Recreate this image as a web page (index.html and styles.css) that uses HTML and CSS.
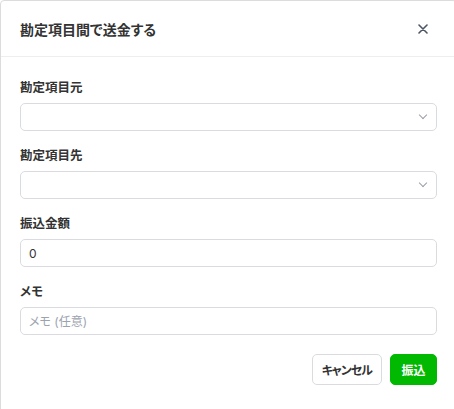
FILE: index.html
```html
<!DOCTYPE html>
<html lang="ja">
<head>
    <meta charset="UTF-8">
    <meta name="viewport" content="width=device-width, initial-scale=1.0">
    <title>勘定項目間で送金する</title>
    <link rel="stylesheet" href="styles.css">
</head>
<body>
    <div class="dialog">
        <!-- ヘッダー -->
        <div class="dialog-header">
            <h2>勘定項目間で送金する</h2>
            <button class="close" aria-label="閉じる">
                <svg width="10" height="10" viewBox="0 0 10 10">
                    <path d="M1 1L9 9M9 1L1 9" stroke="#4b5563" stroke-width="1.6" stroke-linecap="round"/>
                </svg>
            </button>
        </div>
        <!-- フォーム -->
        <div class="dialog-body">
            <div class="field">
                <label>勘定項目元</label>
                <div class="select"><span class="chevron"></span></div>
            </div>
            <div class="field">
                <label>勘定項目先</label>
                <div class="select"><span class="chevron"></span></div>
            </div>
            <div class="field">
                <label>振込金額</label>
                <input type="text" value="0">
            </div>
            <div class="field">
                <label>メモ</label>
                <input type="text" placeholder="メモ (任意)">
            </div>
            <div class="actions">
                <button class="btn btn-cancel">キャンセル</button>
                <button class="btn btn-primary">振込</button>
            </div>
        </div>
    </div>
</body>
</html>
```

FILE: styles.css
```css
html, body {
    margin: 0;
    padding: 0;
    overflow: hidden;
    background: #fff;
}

body {
    font-family: Inter, "Noto Sans CJK JP", sans-serif;
    font-feature-settings: "palt";
    color: #333;
}

.dialog {
    width: 457px;
    height: 420px;
    box-sizing: border-box;
    border: 1px solid #dcdcdc;
    border-radius: 4px;
    background: #fff;
}

.dialog-header {
    display: flex;
    align-items: center;
    justify-content: space-between;
    height: 55px;
    padding: 0 28px 0 19px;
    border-bottom: 1px solid #eeeeee;
}

.dialog-header h2 {
    margin: 0;
    font-size: 14px;
    font-weight: 700;
    color: #333;
}

.close {
    background: none;
    border: none;
    padding: 0;
    display: flex;
    cursor: pointer;
}

.dialog-body {
    padding: 21px 19px 0;
}

.field {
    margin-bottom: 15px;
}

.field label {
    display: block;
    font-size: 12.5px;
    font-weight: 700;
    line-height: 20px;
    margin-bottom: 5px;
    color: #333;
}

.select, .field input {
    display: block;
    width: 100%;
    height: 28px;
    box-sizing: border-box;
    border: 1px solid #d9dbe0;
    border-radius: 5px;
    background: #fff;
    position: relative;
}

.field input {
    padding: 0 8px;
    font-family: Inter, "Noto Sans CJK JP", sans-serif;
    font-feature-settings: "palt";
    font-size: 12px;
    color: #333;
    outline: none;
}

.field input::placeholder {
    color: #9ca3af;
}

.chevron {
    position: absolute;
    right: 10px;
    top: 8px;
    width: 5px;
    height: 5px;
    border-right: 1.3px solid #9aa0a8;
    border-bottom: 1.3px solid #9aa0a8;
    transform: rotate(45deg);
}

.actions {
    display: flex;
    justify-content: flex-end;
    gap: 8px;
    margin-top: 19px;
}

.btn {
    height: 31px;
    padding: 0 9px;
    font-family: Inter, "Noto Sans CJK JP", sans-serif;
    font-feature-settings: "palt";
    font-size: 12px;
    font-weight: 700;
    letter-spacing: -1px;
    border-radius: 5px;
    cursor: pointer;
}

.btn-cancel {
    background: #fff;
    border: 1px solid #d9dbe0;
    color: #333;
}

.btn-primary {
    background: #00b900;
    border: 1px solid #00b900;
    color: #fff;
    padding: 0 10.5px;
    letter-spacing: 0;
}
```
